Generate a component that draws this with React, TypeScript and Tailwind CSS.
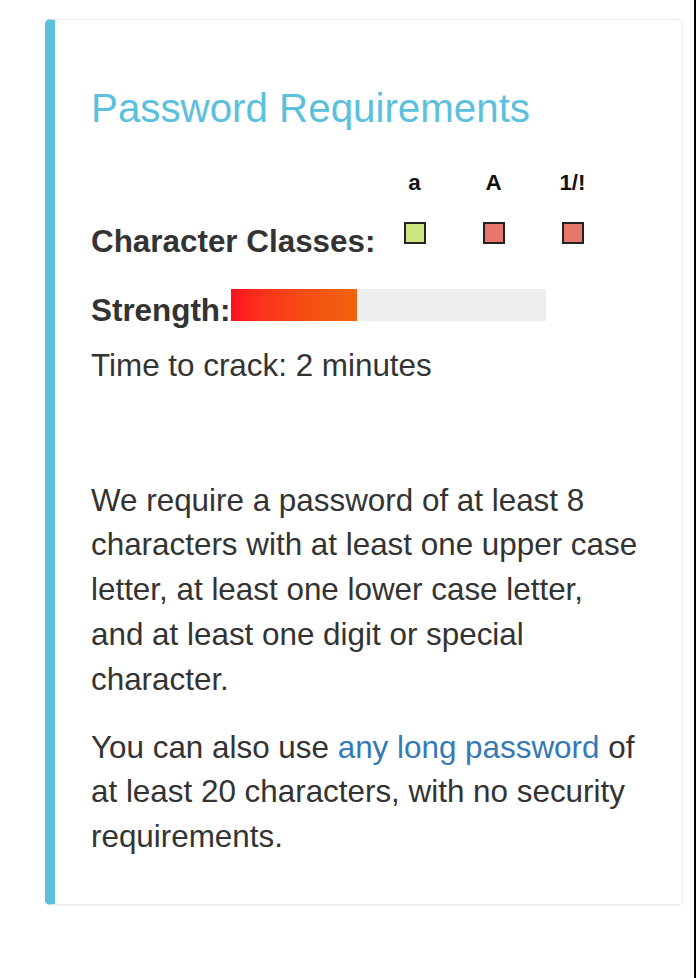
export default function App() {
  const cols = [
    { label: "a", color: "bg-[#cfe57f]" },
    { label: "A", color: "bg-[#e8776b]" },
    { label: "1/!", color: "bg-[#e8776b]" },
  ];

  return (
    <div
      className="relative w-[696px] h-[978px] bg-white overflow-hidden text-[#333]"
      style={{ fontFamily: '"Liberation Sans", Arial, sans-serif' }}
    >
      <div className="absolute right-0 top-0 h-full w-[2px] bg-black" />
      <div className="ml-[45px] mt-[19px] w-[638px] border border-[#eee] border-l-[10px] border-l-[#5bc0de] rounded-[5px] shadow-[0_1px_2px_rgba(0,0,0,0.06)] pl-[36px] pr-[41px] pt-[67px] pb-[44px]">
        <h4 className="text-[40.3px] leading-[44.3px] text-[#5bc0de] font-normal whitespace-nowrap">
          Password Requirements
        </h4>

        <div className="mt-[36px] grid grid-cols-[284px_79px_79px_79px]">
          <div />
          {cols.map((c) => (
            <div key={c.label} className="text-center font-bold text-[22.4px] leading-[32px] text-[#111]">
              {c.label}
            </div>
          ))}
          <div className="mt-[21px] font-bold text-[31.4px] leading-[44.8px] whitespace-nowrap">
            Character Classes:
          </div>
          {cols.map((c) => (
            <div key={c.label + "-box"} className="mt-[23px] flex justify-center">
              <div className={`w-[22px] h-[22px] border-2 border-[#222] ${c.color}`} />
            </div>
          ))}
        </div>

        <div className="mt-[24px] text-[31.4px] leading-[44.8px] whitespace-nowrap">
          <span className="font-bold">Strength:</span>
          <div className="inline-block w-[315px] h-[32px] bg-[#eee]">
            <div className="h-full w-[40%] bg-gradient-to-r from-[#ff0a1e] to-[#ef640a]" />
          </div>
        </div>

        <div className="mt-[10px] text-[31.4px] leading-[44.8px]">Time to crack: 2 minutes</div>

        <p className="mt-[90px] text-[31.4px] leading-[44.8px]">
          We require a password of at least 8 characters with at least one upper case letter, at least one lower
          case letter, and at least one digit or special character.
        </p>
        <p className="mt-[23px] text-[31.4px] leading-[44.8px]">
          You can also use{" "}
          <a href="#" className="text-[#337ab7]">
            any long password
          </a>{" "}
          of at least 20 characters, with no security requirements.
        </p>
      </div>
    </div>
  );
}
